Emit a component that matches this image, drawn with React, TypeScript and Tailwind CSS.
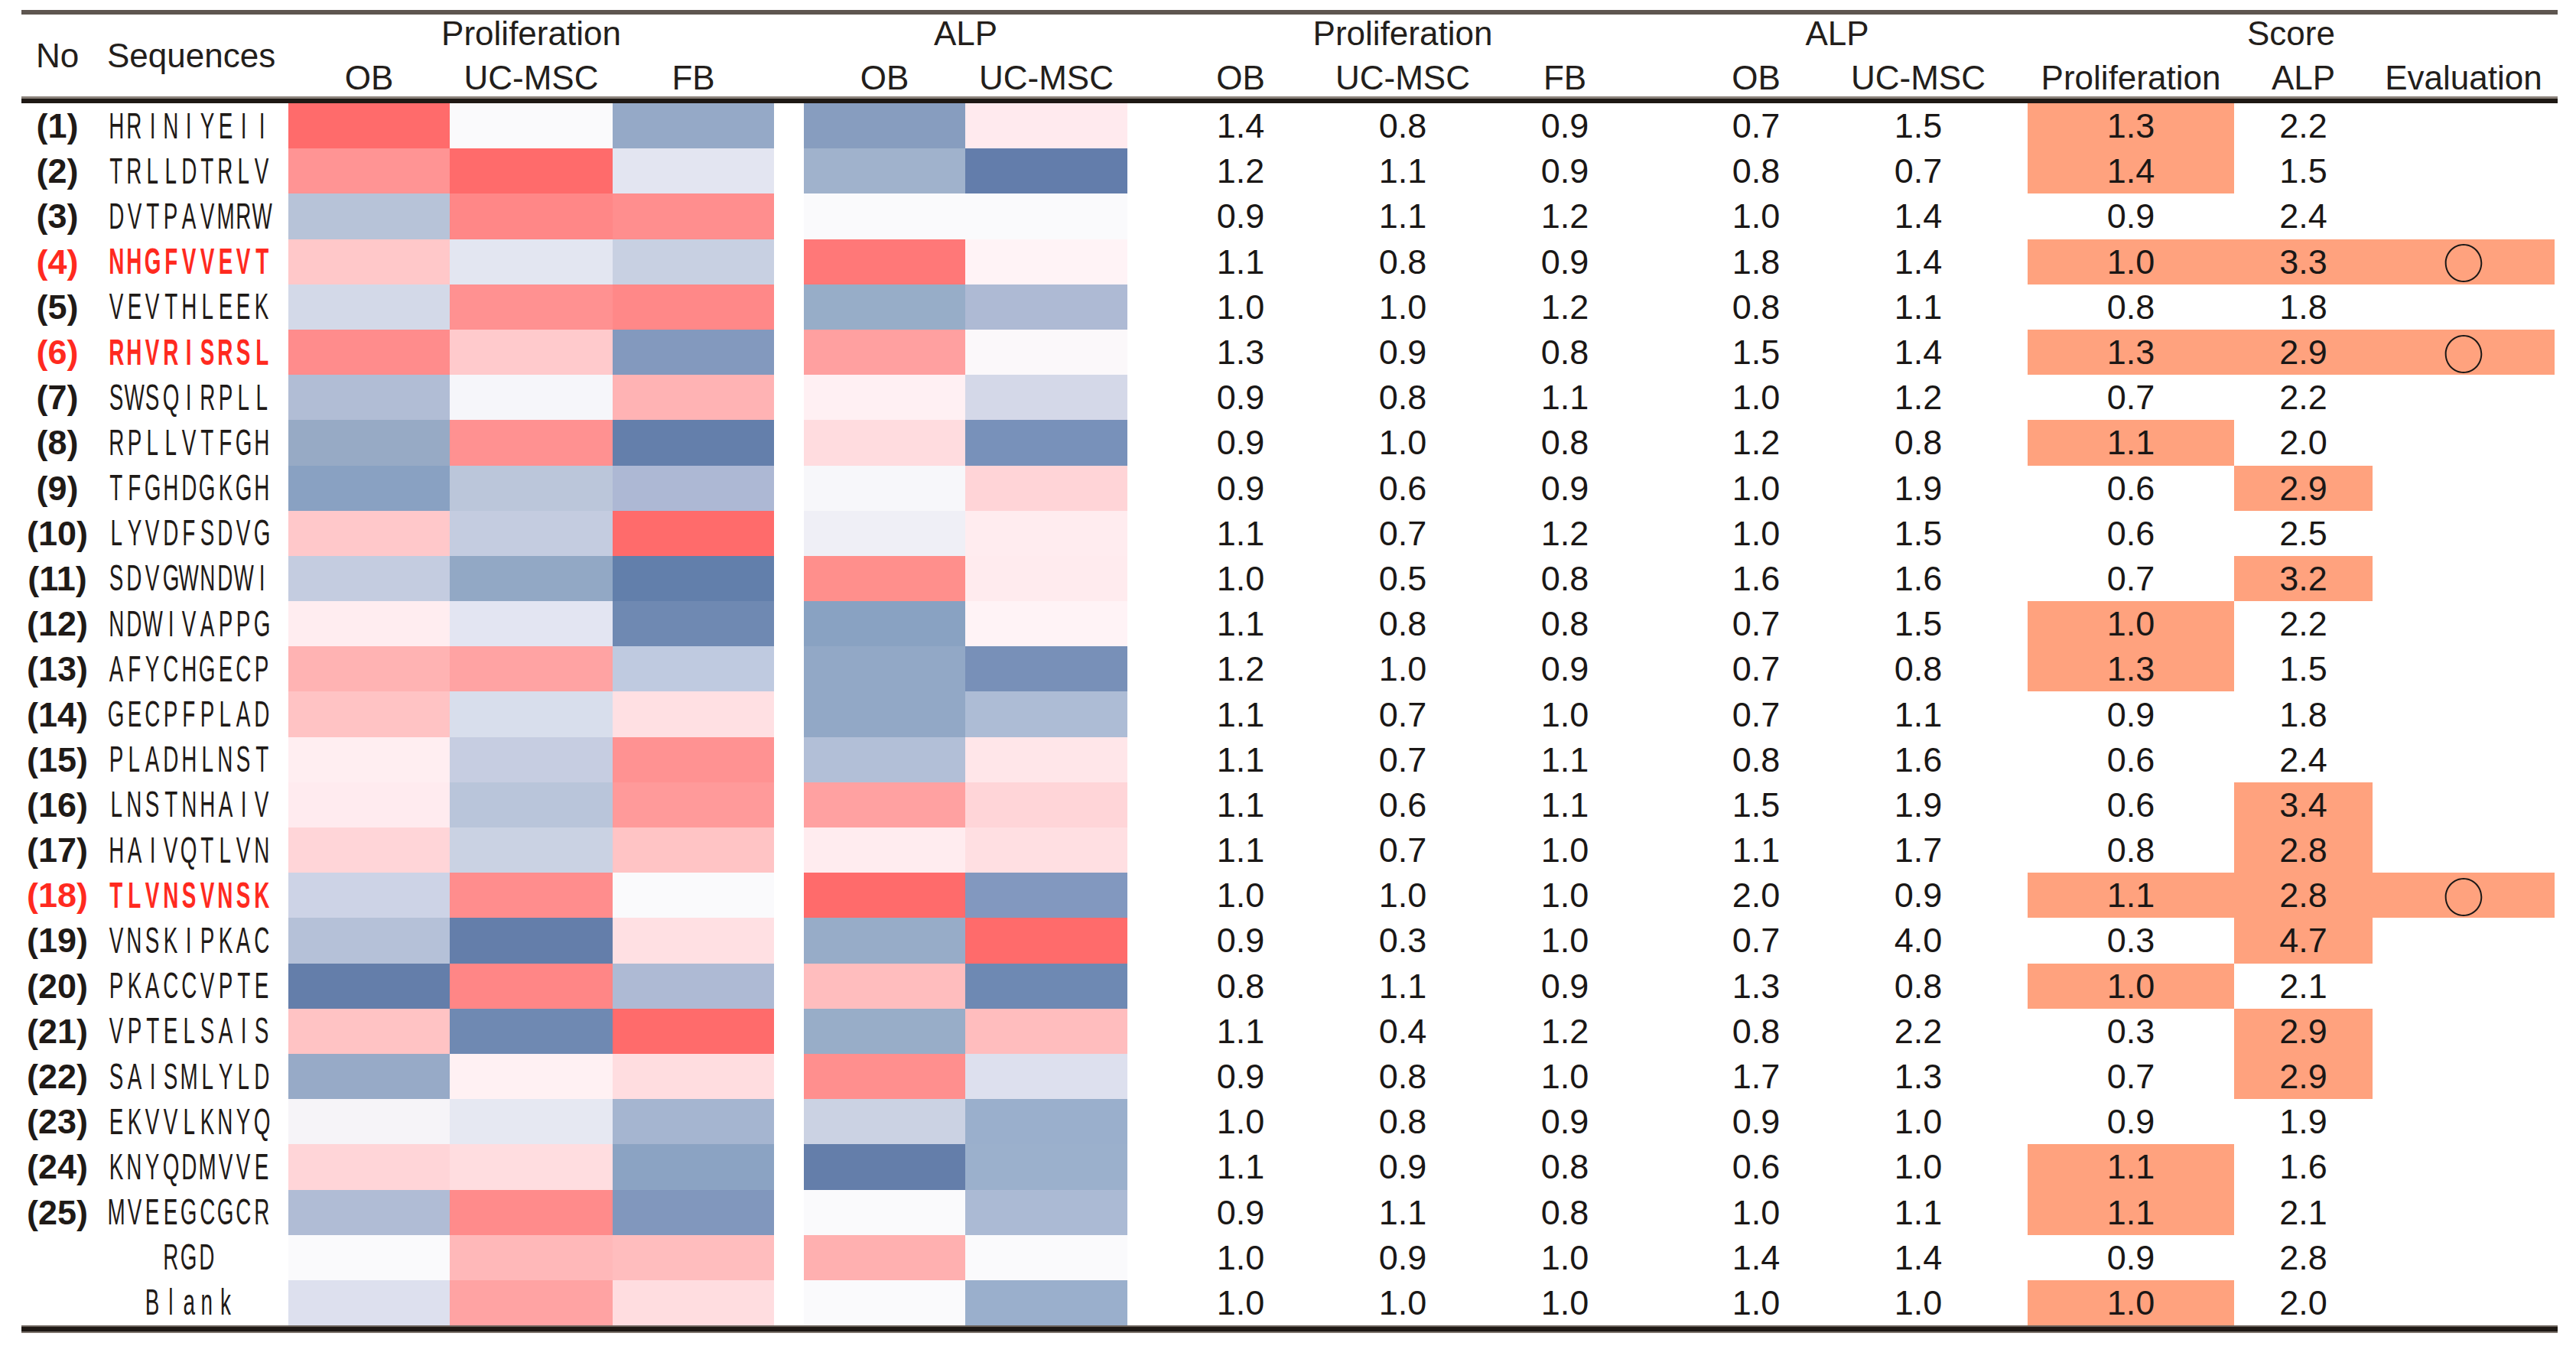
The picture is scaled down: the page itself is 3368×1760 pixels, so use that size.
import { FC } from 'react';

type Row = {
  no?: string;
  seq: string;
  red?: boolean;
  heat: string[];
  vals: string[];
  sp: string;
  sa: string;
  hp?: boolean;
  ha?: boolean;
  ev?: boolean;
};

// same column template for header and body
const GRID =
  'grid grid-cols-[94px_255px_211px_213px_211px_39px_211px_212px_42px_212px_212px_212px_38px_212px_212px_37px_270px_181px_238px_4px]';

const rows: Row[] = [
  { no: '(1)', seq: 'HRINIYEII', heat: ['bg-[#ff6b6b]', 'bg-[#fafafc]', 'bg-[#95a9c7]', 'bg-[#879dbf]', 'bg-[#ffeaee]'], vals: ['1.4', '0.8', '0.9', '0.7', '1.5'], sp: '1.3', sa: '2.2', hp: true },
  { no: '(2)', seq: 'TRLLDTRLV', heat: ['bg-[#ff9494]', 'bg-[#ff6b6b]', 'bg-[#e3e5f1]', 'bg-[#a0b2cc]', 'bg-[#637dab]'], vals: ['1.2', '1.1', '0.9', '0.8', '0.7'], sp: '1.4', sa: '1.5', hp: true },
  { no: '(3)', seq: 'DVTPAVMRW', heat: ['bg-[#b7c3d8]', 'bg-[#ff8787]', 'bg-[#ff8e8e]', 'bg-[#fafafc]', 'bg-[#fafafc]'], vals: ['0.9', '1.1', '1.2', '1.0', '1.4'], sp: '0.9', sa: '2.4' },
  { no: '(4)', seq: 'NHGFVVEVT', red: true, heat: ['bg-[#ffc8c9]', 'bg-[#e3e6f1]', 'bg-[#c8d0e2]', 'bg-[#ff7878]', 'bg-[#fff3f6]'], vals: ['1.1', '0.8', '0.9', '1.8', '1.4'], sp: '1.0', sa: '3.3', hp: true, ha: true, ev: true },
  { no: '(5)', seq: 'VEVTHLEEK', heat: ['bg-[#d3d9e8]', 'bg-[#ff9191]', 'bg-[#ff8888]', 'bg-[#97adc8]', 'bg-[#aebad4]'], vals: ['1.0', '1.0', '1.2', '0.8', '1.1'], sp: '0.8', sa: '1.8' },
  { no: '(6)', seq: 'RHVRISRSL', red: true, heat: ['bg-[#ff8c8c]', 'bg-[#ffcacc]', 'bg-[#8399be]', 'bg-[#ffa0a0]', 'bg-[#fbf8fa]'], vals: ['1.3', '0.9', '0.8', '1.5', '1.4'], sp: '1.3', sa: '2.9', hp: true, ha: true, ev: true },
  { no: '(7)', seq: 'SWSQIRPLL', heat: ['bg-[#b1bdd5]', 'bg-[#f6f6fa]', 'bg-[#ffb3b4]', 'bg-[#fff0f3]', 'bg-[#d4d8e8]'], vals: ['0.9', '0.8', '1.1', '1.0', '1.2'], sp: '0.7', sa: '2.2' },
  { no: '(8)', seq: 'RPLLVTFGH', heat: ['bg-[#97aac5]', 'bg-[#ff9191]', 'bg-[#647fab]', 'bg-[#ffdcdf]', 'bg-[#7891ba]'], vals: ['0.9', '1.0', '0.8', '1.2', '0.8'], sp: '1.1', sa: '2.0', hp: true },
  { no: '(9)', seq: 'TFGHDGKGH', heat: ['bg-[#89a1c2]', 'bg-[#bbc6da]', 'bg-[#adb8d4]', 'bg-[#f7f7fa]', 'bg-[#ffd4d7]'], vals: ['0.9', '0.6', '0.9', '1.0', '1.9'], sp: '0.6', sa: '2.9', ha: true },
  { no: '(10)', seq: 'LYVDFSDVG', heat: ['bg-[#ffc8ca]', 'bg-[#c4cce0]', 'bg-[#ff6b6b]', 'bg-[#efeff6]', 'bg-[#ffecef]'], vals: ['1.1', '0.7', '1.2', '1.0', '1.5'], sp: '0.6', sa: '2.5' },
  { no: '(11)', seq: 'SDVGWNDWI', heat: ['bg-[#c4cce0]', 'bg-[#92a8c5]', 'bg-[#627fab]', 'bg-[#ff8f8c]', 'bg-[#ffebee]'], vals: ['1.0', '0.5', '0.8', '1.6', '1.6'], sp: '0.7', sa: '3.2', ha: true },
  { no: '(12)', seq: 'NDWIVAPPG', heat: ['bg-[#ffedf0]', 'bg-[#e3e5f2]', 'bg-[#6f89b2]', 'bg-[#89a2c2]', 'bg-[#fff3f6]'], vals: ['1.1', '0.8', '0.8', '0.7', '1.5'], sp: '1.0', sa: '2.2', hp: true },
  { no: '(13)', seq: 'AFYCHGECP', heat: ['bg-[#ffb3b3]', 'bg-[#ffa3a3]', 'bg-[#bfcae0]', 'bg-[#92a8c6]', 'bg-[#7890b8]'], vals: ['1.2', '1.0', '0.9', '0.7', '0.8'], sp: '1.3', sa: '1.5', hp: true },
  { no: '(14)', seq: 'GECPFPLAD', heat: ['bg-[#ffc3c4]', 'bg-[#d8deec]', 'bg-[#ffe0e3]', 'bg-[#92a8c6]', 'bg-[#adbcd5]'], vals: ['1.1', '0.7', '1.0', '0.7', '1.1'], sp: '0.9', sa: '1.8' },
  { no: '(15)', seq: 'PLADHLNST', heat: ['bg-[#ffeef1]', 'bg-[#c6cde1]', 'bg-[#ff9292]', 'bg-[#b2bfd7]', 'bg-[#ffe6e9]'], vals: ['1.1', '0.7', '1.1', '0.8', '1.6'], sp: '0.6', sa: '2.4' },
  { no: '(16)', seq: 'LNSTNHAIV', heat: ['bg-[#ffebef]', 'bg-[#b9c5da]', 'bg-[#ff9a9a]', 'bg-[#ffa1a1]', 'bg-[#ffd5d8]'], vals: ['1.1', '0.6', '1.1', '1.5', '1.9'], sp: '0.6', sa: '3.4', ha: true },
  { no: '(17)', seq: 'HAIVQTLVN', heat: ['bg-[#ffd5d8]', 'bg-[#cad2e3]', 'bg-[#ffc4c5]', 'bg-[#ffecef]', 'bg-[#ffdfe2]'], vals: ['1.1', '0.7', '1.0', '1.1', '1.7'], sp: '0.8', sa: '2.8', ha: true },
  { no: '(18)', seq: 'TLVNSVNSK', red: true, heat: ['bg-[#cdd3e6]', 'bg-[#ff8d8d]', 'bg-[#fafafc]', 'bg-[#ff6b6b]', 'bg-[#8298bf]'], vals: ['1.0', '1.0', '1.0', '2.0', '0.9'], sp: '1.1', sa: '2.8', hp: true, ha: true, ev: true },
  { no: '(19)', seq: 'VNSKIPKAC', heat: ['bg-[#b5c1d8]', 'bg-[#647eaa]', 'bg-[#ffe0e3]', 'bg-[#97acc8]', 'bg-[#ff6b6b]'], vals: ['0.9', '0.3', '1.0', '0.7', '4.0'], sp: '0.3', sa: '4.7', ha: true },
  { no: '(20)', seq: 'PKACCVPTE', heat: ['bg-[#647eaa]', 'bg-[#ff8686]', 'bg-[#aebad4]', 'bg-[#ffbdbe]', 'bg-[#6e89b3]'], vals: ['0.8', '1.1', '0.9', '1.3', '0.8'], sp: '1.0', sa: '2.1', hp: true },
  { no: '(21)', seq: 'VPTELSAIS', heat: ['bg-[#ffc3c4]', 'bg-[#6f89b2]', 'bg-[#ff6b6b]', 'bg-[#98adc8]', 'bg-[#ffbdbe]'], vals: ['1.1', '0.4', '1.2', '0.8', '2.2'], sp: '0.3', sa: '2.9', ha: true },
  { no: '(22)', seq: 'SAISMLYLD', heat: ['bg-[#97aac7]', 'bg-[#fff1f3]', 'bg-[#ffdde0]', 'bg-[#ff8f8e]', 'bg-[#dde0ee]'], vals: ['0.9', '0.8', '1.0', '1.7', '1.3'], sp: '0.7', sa: '2.9', ha: true },
  { no: '(23)', seq: 'EKVVLKNYQ', heat: ['bg-[#f6f4f8]', 'bg-[#e6e8f2]', 'bg-[#a5b5d0]', 'bg-[#cbd2e3]', 'bg-[#9aafcc]'], vals: ['1.0', '0.8', '0.9', '0.9', '1.0'], sp: '0.9', sa: '1.9' },
  { no: '(24)', seq: 'KNYQDMVVE', heat: ['bg-[#ffd5d8]', 'bg-[#ffdde0]', 'bg-[#8ba3c3]', 'bg-[#647eaa]', 'bg-[#9bb0cc]'], vals: ['1.1', '0.9', '0.8', '0.6', '1.0'], sp: '1.1', sa: '1.6', hp: true },
  { no: '(25)', seq: 'MVEEGCGCR', heat: ['bg-[#b0bcd5]', 'bg-[#ff8b8b]', 'bg-[#8197bd]', 'bg-[#fafafc]', 'bg-[#abbad4]'], vals: ['0.9', '1.1', '0.8', '1.0', '1.1'], sp: '1.1', sa: '2.1', hp: true },
  { seq: 'RGD', heat: ['bg-[#fafafc]', 'bg-[#ffb8b9]', 'bg-[#ffbdbe]', 'bg-[#ffb0b0]', 'bg-[#fafafc]'], vals: ['1.0', '0.9', '1.0', '1.4', '1.4'], sp: '0.9', sa: '2.8' },
  { seq: 'Blank', heat: ['bg-[#dde0ee]', 'bg-[#ffa3a3]', 'bg-[#ffdde0]', 'bg-[#fafafc]', 'bg-[#9aafcc]'], vals: ['1.0', '1.0', '1.0', '1.0', '1.0'], sp: '1.0', sa: '2.0', hp: true },
];

// monospaced, condensed peptide letters
const Seq: FC<{ text: string; red?: boolean }> = ({ text, red }) => (
  <div className={`flex ${red ? 'font-bold text-[#ff2a1f]' : 'text-[#1f1a17]'}`}>
    {text.split('').map((ch, i) => (
      <span key={i} className="flex w-[23.8px] justify-center">
        <span className="inline-block scale-x-[0.58] text-[48px] leading-[48px]">{ch}</span>
      </span>
    ))}
  </div>
);

const Num: FC<{ v: string; hl?: boolean }> = ({ v, hl }) => (
  <div className={`flex items-center justify-center ${hl ? 'bg-[#ffa27e]' : ''}`}>{v}</div>
);

const TableRow: FC<{ row: Row }> = ({ row }) => (
  <div className={`${GRID} h-[59.2px] text-[45px] leading-[45px] text-[#1a1716]`}>
    <div className={`flex items-center justify-center font-bold ${row.red ? 'text-[#ff2a1f]' : 'text-[#1f1a17]'}`}>
      {row.no}
    </div>
    <div className="flex items-center pl-[18px]">
      {row.no ? (
        <Seq text={row.seq} red={row.red} />
      ) : (
        <div className="flex w-[214px] justify-center">
          <Seq text={row.seq} />
        </div>
      )}
    </div>
    <div className={row.heat[0]} />
    <div className={row.heat[1]} />
    <div className={row.heat[2]} />
    <div />
    <div className={row.heat[3]} />
    <div className={row.heat[4]} />
    <div />
    <Num v={row.vals[0]} />
    <Num v={row.vals[1]} />
    <Num v={row.vals[2]} />
    <div />
    <Num v={row.vals[3]} />
    <Num v={row.vals[4]} />
    <div />
    <Num v={row.sp} hl={row.hp} />
    <Num v={row.sa} hl={row.ha} />
    <div className={`flex items-center justify-center ${row.ev ? 'bg-[#ffa27e]' : ''}`}>
      {row.ev && <span className="font-['Noto_Sans_CJK_JP',sans-serif] text-[54px] leading-[54px]">○</span>}
    </div>
    <div />
  </div>
);

const Header: FC = () => (
  <div className={`${GRID} h-[107px] grid-rows-[50px_57px] text-[44px] leading-[44px] text-[#231e1b]`}>
    <div className="row-span-2 flex items-center justify-center">No</div>
    <div className="row-span-2 flex items-center pl-[18px]">Sequences</div>
    <div className="col-span-3 flex items-center justify-center">Proliferation</div>
    <div className="row-span-2" />
    <div className="col-span-2 flex items-center justify-center">ALP</div>
    <div className="row-span-2" />
    <div className="col-span-3 flex items-center justify-center">Proliferation</div>
    <div className="row-span-2" />
    <div className="col-span-2 flex items-center justify-center">ALP</div>
    <div className="row-span-2" />
    <div className="col-span-3 flex items-center justify-center">Score</div>
    <div className="row-span-2" />
    {['OB', 'UC-MSC', 'FB'].map((t) => (
      <div key={`a${t}`} className="flex items-end justify-center pb-[2px]">{t}</div>
    ))}
    {['OB', 'UC-MSC'].map((t) => (
      <div key={`b${t}`} className="flex items-end justify-center pb-[2px]">{t}</div>
    ))}
    {['OB', 'UC-MSC', 'FB'].map((t) => (
      <div key={`c${t}`} className="flex items-end justify-center pb-[2px]">{t}</div>
    ))}
    {['OB', 'UC-MSC'].map((t) => (
      <div key={`d${t}`} className="flex items-end justify-center pb-[2px]">{t}</div>
    ))}
    {['Proliferation', 'ALP', 'Evaluation'].map((t) => (
      <div key={`e${t}`} className="flex items-end justify-center pb-[2px]">{t}</div>
    ))}
  </div>
);

export default function App() {
  return (
    <div className="min-h-[1760px] w-[3368px] bg-white font-['Liberation_Sans',Arial,sans-serif]">
      <div className="ml-[28px] w-[3316px] pt-[13px]">
        <div className="h-[6px] bg-[#5e5650]" />
        <Header />
        <div className="h-[3px] bg-[#8a817a]" />
        <div className="h-[6px] bg-[#1e1814]" />
        {rows.map((r) => (
          <TableRow key={r.seq} row={r} />
        ))}
        <div className="h-[2px] bg-[#6b625b]" />
        <div className="h-[6px] bg-[#1e1814]" />
        <div className="h-[2px] bg-[#7a716a]" />
      </div>
    </div>
  );
}
